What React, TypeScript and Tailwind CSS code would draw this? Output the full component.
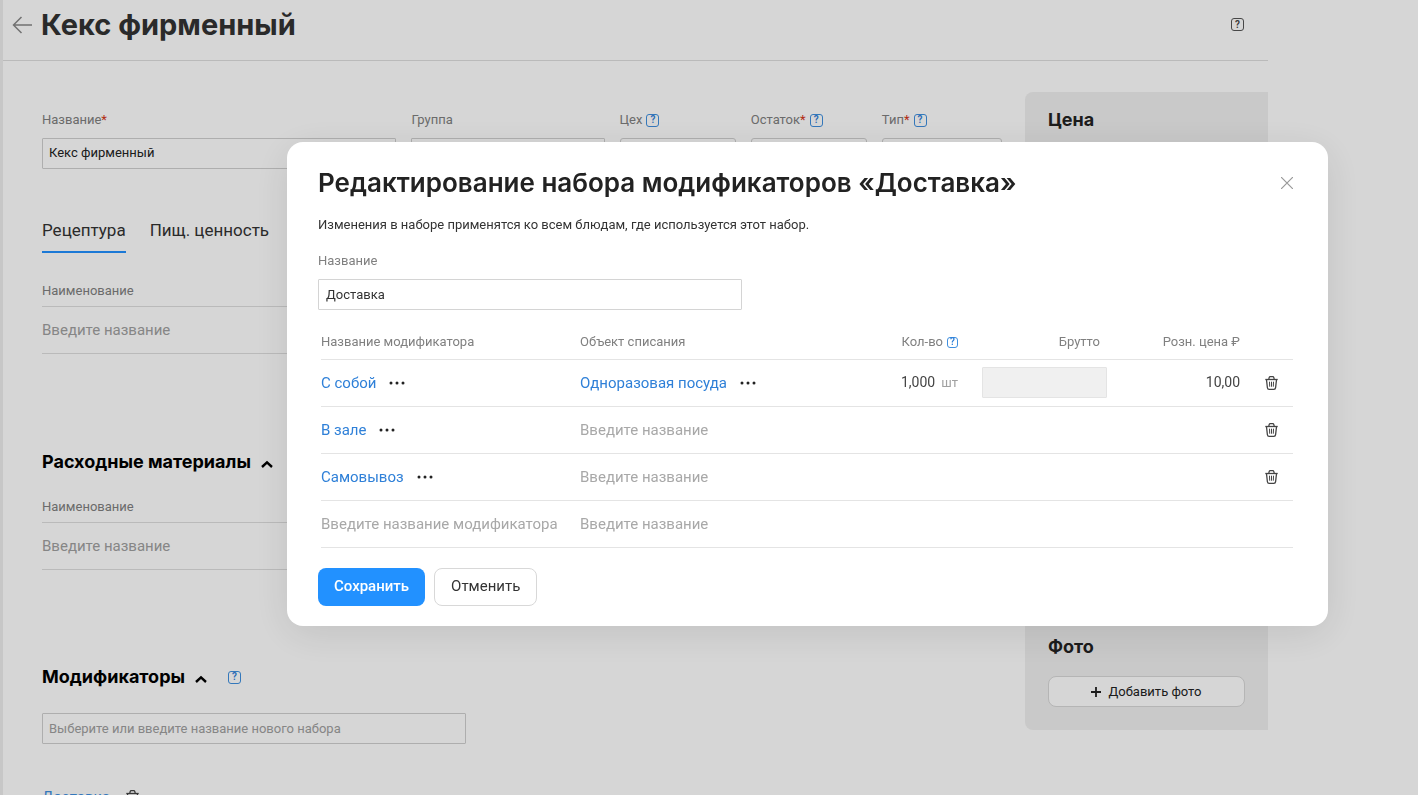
import { useId } from "react";

type ModifierRow = {
  name: string;
  item?: string;
  qty?: string;
  unit?: string;
  price?: string;
};

const rows: ModifierRow[] = [
  { name: "С собой", item: "Одноразовая посуда", qty: "1,000", unit: "шт", price: "10,00" },
  { name: "В зале" },
  { name: "Самовывоз" },
];

function HelpButton({ className = "size-[13px] border-[#3f8fdf] text-[#2f80d8]" }: { className?: string }) {
  return (
    <button
      type="button"
      aria-label="Подсказка"
      className={`inline-flex shrink-0 items-center justify-center rounded-[3px] border text-[10px] leading-none font-semibold ${className}`}
    >
      ?
    </button>
  );
}

function TrashIcon() {
  return (
    <svg className="h-[14px] w-[13px]" viewBox="0 0 13 14" fill="none" stroke="currentColor">
      <path d="M.3 3.5h12.4" strokeWidth="1.3" />
      <path d="M3.7 3.5l.5-2q.2-.8 1-.8h2.600q.8 0 1 .8l.5 2" strokeWidth="1.2" />
      <path d="M1.5 3.7l.9 8q.2 1.600 1.700 1.600h4.800q1.500 0 1.700-1.600l.9-8" strokeWidth="1.300" />
      <path d="M4.500 5.700l.2 5M6.500 5.700v5M8.500 5.700l-.2 5" strokeWidth="1" />
    </svg>
  );
}

function DotsButton() {
  return (
    <button type="button" aria-label="Ещё" className="text-[#222]">
      <svg className="h-1 w-4" viewBox="0 0 16 4" fill="currentColor">
        <circle cx="2" cy="2" r="1.500" />
        <circle cx="8" cy="2" r="1.500" />
        <circle cx="14" cy="2" r="1.500" />
      </svg>
    </button>
  );
}

function ChevronUp() {
  return (
    <svg className="mt-1 h-2 w-3" viewBox="0 0 12 8" fill="none" stroke="currentColor" strokeWidth="2.400">
      <path d="M1 7l5-4.600L11 7" />
    </svg>
  );
}

type FieldProps = {
  label: string;
  value?: string;
  required?: boolean;
  help?: boolean;
  select?: boolean;
};

function Field({ label, value = "", required, help, select }: FieldProps) {
  const id = useId();

  return (
    <div className="min-w-0">
      <div className="mb-2 flex h-5 items-center gap-1">
        <label htmlFor={id} className="text-[13px] text-[#808080]">
          {label}
          {required && <span className="text-[#d43517]">*</span>}
        </label>
        {help && <HelpButton />}
      </div>
      {select ? (
        <select
          id={id}
          className="h-[31px] w-full appearance-none rounded-[3px] border border-[#d0d0d0] bg-white px-2 text-[13px]"
        />
      ) : (
        <input
          id={id}
          defaultValue={value}
          className="h-[31px] w-full rounded-[1px] border border-[#d0d0d0] bg-white px-1.5 pb-0.5 text-[13px] text-[#222]"
        />
      )}
    </div>
  );
}

function NameTable() {
  return (
    <table className="w-full text-left">
      <thead>
        <tr className="border-b border-[#dedede]">
          <th className="h-[26px] pb-1 text-[13px] leading-5 font-normal text-[#808080]">
            Наименование
          </th>
        </tr>
      </thead>
      <tbody>
        <tr className="border-b border-[#dedede]">
          <td className="h-[47px]">
            <input
              aria-label="Наименование"
              placeholder="Введите название"
              className="w-full text-[15px] placeholder:text-[#a0a0a0]"
            />
          </td>
        </tr>
      </tbody>
    </table>
  );
}

function ProductPage() {
  return (
    <div className="min-h-screen border-l-3 border-[#eee] pr-[150px]">
      <header className="flex h-[61px] items-start border-b border-[#dedede] pt-[7px] pr-6 pl-[9px]">
        <button type="button" aria-label="Назад" className="mt-[9px] text-[#888]">
          <svg className="h-[18px] w-5" viewBox="0 0 20 18" fill="none" stroke="currentColor" strokeWidth="1.500">
            <path d="M20 9H1.500M9.500 1L1.500 9l8 8" />
          </svg>
        </button>
        <h1 className="ml-[9px] font-['Inter',sans-serif] text-[29px] leading-9 font-bold text-[#333]">
          Кекс фирменный
        </h1>
        <div className="mt-[11px] ml-auto flex">
          <HelpButton className="size-[13px] border-[#555] text-[#444]" />
        </div>
      </header>

      <div className="flex items-start pl-[39px]">
        <main className="min-w-0 flex-1 pt-[49px] pr-[23px]">
          <div className="grid grid-cols-[354fr_193fr_116fr_116fr_120fr] gap-[15px]">
            <Field label="Название" value="Кекс фирменный" required />
            <Field label="Группа" />
            <Field label="Цех" help select />
            <Field label="Остаток" required help select />
            <Field label="Тип" required help select />
          </div>

          <nav className="mt-[49px] mb-[27px] flex gap-6 text-[17px] leading-6 text-[#333]">
            <a href="#recipe" className="border-b-2 border-[#2291ff] pb-[9px]">
              Рецептура
            </a>
            <a href="#nutrition">Пищ. ценность</a>
          </nav>
          <NameTable />

          <h2 className="mt-24 mb-[23px] font-['Inter',sans-serif] text-lg leading-6 font-bold">
            <button type="button" className="flex items-center gap-[10px]">
              Расходные материалы
              <ChevronUp />
            </button>
          </h2>
          <NameTable />

          <div className="mt-[95px] mb-6 flex items-center gap-[21px]">
            <h2 className="font-['Inter',sans-serif] text-lg leading-6 font-bold">
              <button type="button" className="flex items-center gap-[10px]">
                Модификаторы
                <ChevronUp />
              </button>
            </h2>
            <HelpButton />
          </div>
          <input
            aria-label="Набор модификаторов"
            placeholder="Выберите или введите название нового набора"
            className="block h-[31px] w-[424px] rounded-[1px] border border-[#d0d0d0] px-1.5 pb-px text-[13px] placeholder:text-[#a0a0a0]"
          />
          <div className="mt-[43px] flex items-center gap-4">
            <a href="#delivery" className="text-[15px] leading-5 text-[#3f8fdf]">
              Доставка
            </a>
            <button type="button" aria-label="Удалить набор" className="text-[#444]">
              <TrashIcon />
            </button>
          </div>
        </main>

        <aside className="mt-[31px] flex h-[638px] w-[243px] flex-col justify-between rounded-l-lg bg-[#f0f0f0] px-[23px] pt-4 pb-[23px]">
          <h2 className="font-['Inter',sans-serif] text-lg leading-6 font-bold text-[#222]">Цена</h2>
          <div>
            <h2 className="font-['Inter',sans-serif] text-lg leading-6 font-bold text-[#222]">Фото</h2>
            <button
              type="button"
              className="mt-[17px] flex h-[31px] w-full items-center justify-center gap-[7px] rounded-lg border border-[#d8d8d8] bg-white text-[13px] text-[#222]"
            >
              <svg className="size-[10px]" viewBox="0 0 10 10" stroke="currentColor" strokeWidth="1.800">
                <path d="M0 5h10M5 0v10" />
              </svg>
              Добавить фото
            </button>
          </div>
        </aside>
      </div>
    </div>
  );
}

function ModifierTable() {
  return (
    <table className="w-full table-fixed text-left">
      <colgroup>
        <col className="w-[259px]" />
        <col />
        <col className="w-[90px]" />
        <col className="w-[149px]" />
        <col className="w-[133px]" />
        <col className="w-[53px]" />
      </colgroup>
      <thead className="text-[13px] leading-5 text-[#808080]">
        <tr className="border-b border-[#e4e4e4]">
          <th className="pb-[7px] font-normal">Название модификатора</th>
          <th className="pb-[7px] font-normal">Объект списания</th>
          <th className="pb-[7px] font-normal">
            <span className="flex items-center justify-end gap-1 whitespace-nowrap">
              Кол-во
              <HelpButton className="size-[11px] border-[#3f8fdf] text-[#2f80d8]" />
            </span>
          </th>
          <th className="pr-[7px] pb-[7px] text-right font-normal">Брутто</th>
          <th className="pb-[7px] text-right font-normal">Розн. цена ₽</th>
          <th />
        </tr>
      </thead>
      <tbody className="text-[15px] leading-5">
        {rows.map((row) => (
          <tr key={row.name} className="h-[47px] border-b border-[#e4e4e4]">
            <td className="pb-px">
              <div className="flex items-center gap-[13px]">
                <a href="#modifier" className="text-[#2f80d8]">
                  {row.name}
                </a>
                <DotsButton />
              </div>
            </td>
            <td className="pb-px">
              {row.item ? (
                <div className="flex items-center gap-[13px]">
                  <a href="#item" className="text-[#2f80d8]">
                    {row.item}
                  </a>
                  <DotsButton />
                </div>
              ) : (
                <input
                  aria-label="Объект списания"
                  placeholder="Введите название"
                  className="w-full placeholder:text-[#a8a8a8]"
                />
              )}
            </td>
            <td className="pb-0.5 text-right text-sm whitespace-nowrap text-[#444]">
              {row.qty}
              {row.unit && <span className="ml-1.5 text-[13px] text-[#a0a0a0]">{row.unit}</span>}
            </td>
            <td className="pb-px pl-6">
              {row.qty && (
                <input
                  aria-label="Брутто"
                  disabled
                  className="block h-[31px] w-full rounded-[1px] border border-[#e4e4e4] bg-[#f0f0f0]"
                />
              )}
            </td>
            <td className="pb-0.5 text-right text-sm text-[#444]">{row.price}</td>
            <td className="pl-[25px]">
              <button type="button" aria-label="Удалить" className="block text-[#444]">
                <TrashIcon />
              </button>
            </td>
          </tr>
        ))}
        <tr className="h-[47px] border-b border-[#e4e4e4]">
          <td>
            <input
              aria-label="Название модификатора"
              placeholder="Введите название модификатора"
              className="w-full placeholder:text-[#a8a8a8]"
            />
          </td>
          <td>
            <input
              aria-label="Объект списания"
              placeholder="Введите название"
              className="w-full placeholder:text-[#a8a8a8]"
            />
          </td>
          <td colSpan={4} />
        </tr>
      </tbody>
    </table>
  );
}

function EditModal() {
  return (
    <div className="fixed inset-0 flex items-start bg-black/16 pt-[142px] pr-[90px] pl-[287px]">
      <section
        role="dialog"
        aria-labelledby="modal-title"
        className="min-w-0 flex-1 rounded-2xl bg-white pt-[25px] pr-[35px] pb-5 pl-[31px] shadow-[0_8px_40px_rgba(0,0,0,0.1)]"
      >
        <div className="flex items-center justify-between">
          <h2
            id="modal-title"
            className="font-['Inter',sans-serif] text-[26px] leading-8 font-semibold text-[#222]"
          >
            Редактирование набора модификаторов «Доставка»
          </h2>
          <button type="button" aria-label="Закрыть" className="text-[#999]">
            <svg className="size-3" viewBox="0 0 12 12" stroke="currentColor" strokeWidth="1.200">
              <path d="M0 0l12 12M12 0L0 12" />
            </svg>
          </button>
        </div>
        <p className="mt-4 text-[13px] leading-5 text-[#333]">
          Изменения в наборе применятся ко всем блюдам, где используется этот набор.
        </p>
        <label htmlFor="set-name" className="mt-4 block text-[13px] leading-5 text-[#808080]">
          Название
        </label>
        <input
          id="set-name"
          defaultValue="Доставка"
          className="mt-2 block h-[31px] w-[424px] rounded-[1px] border border-[#d4d4d4] px-[7px] pb-px text-[13px] text-[#333]"
        />
        <div className="mt-[22px] pl-[3px]">
          <ModifierTable />
        </div>
        <div className="mt-5 flex gap-[9px]">
          <button type="button" className="h-[38px] rounded-lg bg-[#2291ff] px-4 pb-0.5 text-[15px] font-medium text-white">
            Сохранить
          </button>
          <button type="button" className="h-[38px] rounded-lg border border-[#d8d8d8] bg-white px-4 pb-0.5 text-[15px] text-[#333]">
            Отменить
          </button>
        </div>
      </section>
    </div>
  );
}

export default function App() {
  return (
    <div className="h-screen overflow-hidden bg-white font-['Roboto',sans-serif]">
      <ProductPage />
      <EditModal />
    </div>
  );
}
